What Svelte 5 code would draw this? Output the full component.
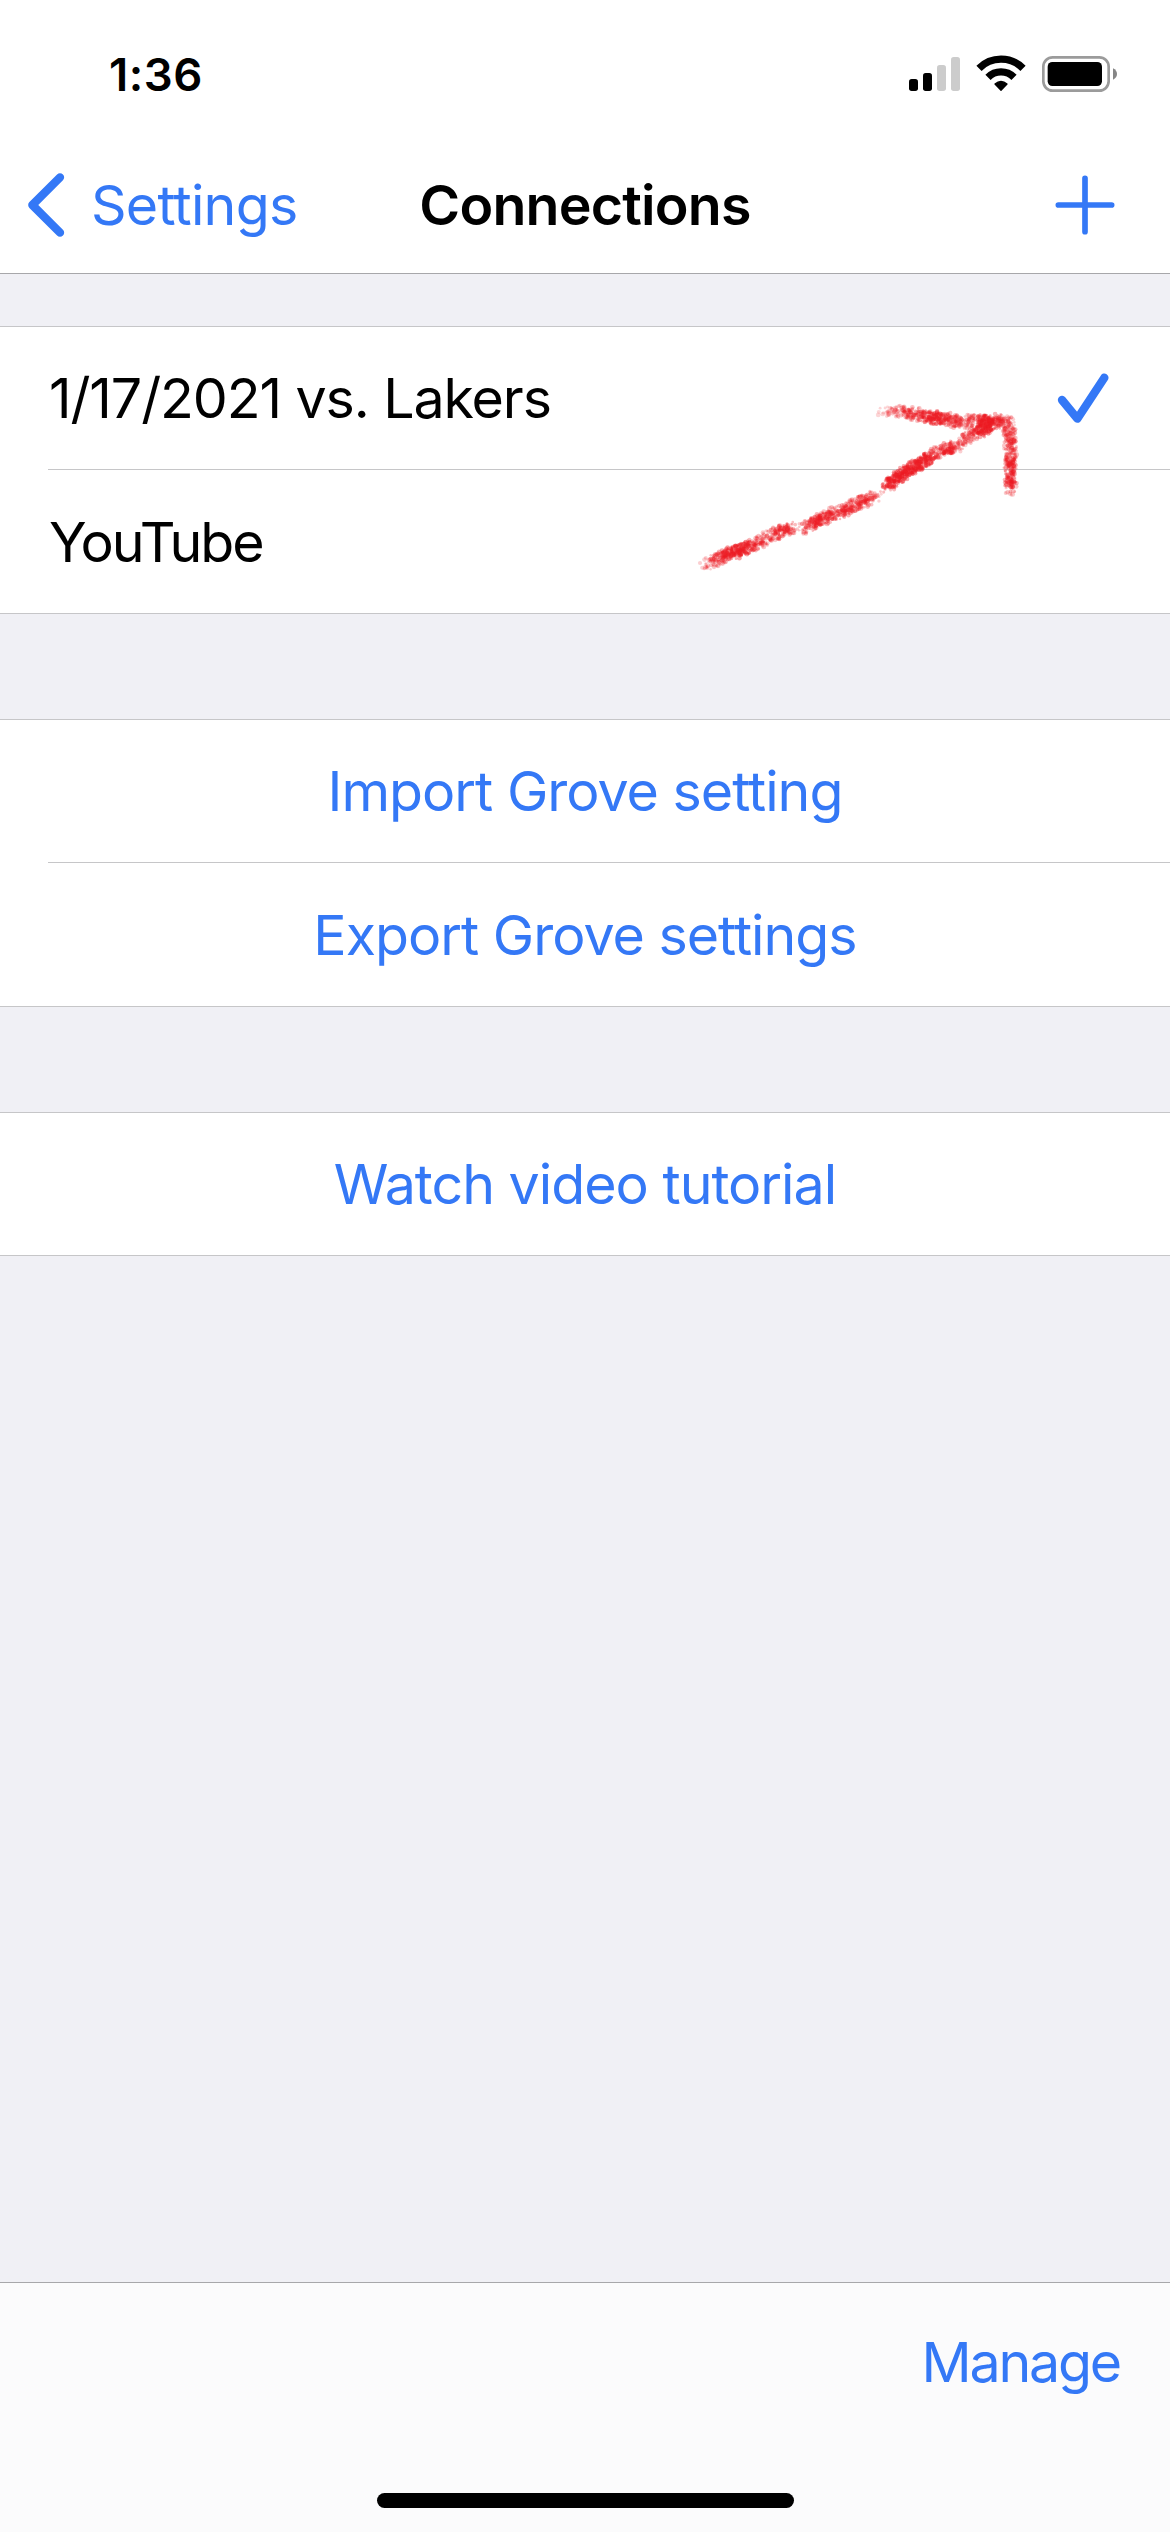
<script>
    let connections = [
        {name: "1/17/2021 vs. Lakers", cls: "lakers", selected: true},
        {name: "YouTube", cls: "youtube", selected: false}
    ]

    let settings = ["Import Grove setting", "Export Grove settings"]

    // points of the crayon strokes: x, y, density
    let strokes = [
        [[76,642,0.3],[105,632,0.5],[140,615,0.95],[175,604,1],[220,585,0.65],[265,562,0.35],[310,540,0.8],[336,532,0.5]],
        [[366,537,0.4],[415,513,0.85],[455,492,0.45],[490,485,0.75],[530,462,0.6],[575,442,0.6],[586,442,0.3]],
        [[618,415,0.55],[640,392,1],[690,356,0.85],[740,328,1],[772,306,0.4],[800,299,0.95],[832,287,0.3],[857,266,0.45],[885,248,0.6],[915,238,1],[945,222,0.7]],
        [[610,190,0.2],[640,187,0.25],[685,187,0.6],[725,197,0.55],[775,205,1],[802,207,0.6],[832,216,0.55],[870,212,0.4],[915,213,1],[960,211,0.6],[990,218,0.3]],
        [[988,222,0.3],[988,250,0.7],[993,290,0.45],[991,330,0.6],[993,360,0.7],[991,400,0.75],[990,426,0.25]]
    ]

    let seed = 7
    function random(){
        seed = (seed * 16807) % 2147483647
        return seed / 2147483647
    }

    // scatter small dots along each stroke
    function scatter(){
        let dots = []
        for(let points of strokes){
            for(let i = 0; i < points.length - 1; i++){
                let [x1, y1, d1] = points[i]
                let [x2, y2, d2] = points[i + 1]
                let length = Math.hypot(x2 - x1, y2 - y1)
                for(let s = 0; s < length; s += 0.42){
                    let t = s / length
                    let density = d1 + (d2 - d1) * t
                    if(random() > density + 0.1){
                        continue
                    }
                    let angle = random() * Math.PI * 2
                    let spread = Math.pow(random(), 0.6) * 21
                    dots.push({
                        x: (x1 + (x2 - x1) * t + Math.cos(angle) * spread).toFixed(1),
                        y: (y1 + (y2 - y1) * t + Math.sin(angle) * spread).toFixed(1),
                        r: (3.5 + random() * 4).toFixed(1),
                        o: (0.12 + density * 0.28).toFixed(2)
                    })
                }
            }
        }
        return dots
    }

    let dots = scatter()
</script>

<main>
    <header>
        <div class="status">
            <span class="time">1:36</span>
            <svg class="indicators" viewBox="0 0 630 120">
                <g transform="translate(-138 -72)">
                    <rect x="141" y="147" width="27" height="36" rx="8" />
                    <rect x="183" y="129" width="27" height="54" rx="8" />
                    <rect class="off" x="225" y="105" width="27" height="78" rx="8" />
                    <rect class="off" x="267" y="81" width="27" height="102" rx="8" />

                    <path class="wave" d="M351 115a93 93 0 0 1 132 0" />
                    <path class="wave" d="M378 142a55 55 0 0 1 78 0" />
                    <path class="wedge" d="M417 181l-18-19q18-15 36 0z" />

                    <rect class="shell" x="544" y="82" width="196" height="100" rx="28" />
                    <rect x="557" y="96" width="163" height="72" rx="14" />
                    <path class="nub" d="M753 115q12 6 12 17t-12 17z" />
                </g>
            </svg>
        </div>
        <nav>
            <button class="back">
                <svg class="chevron" viewBox="0 0 114 192"><path d="M99 13L16 96l83 83" /></svg>
                <span>Settings</span>
            </button>
            <h1>Connections</h1>
            <button class="add" aria-label="Add">
                <svg class="plus" viewBox="0 0 180 180"><path d="M90 10v160M10 90h160" /></svg>
            </button>
        </nav>
    </header>

    <section class="list">
        {#each connections as connection}
            <div class="row">
                <span class="label {connection.cls}">{connection.name}</span>
                {#if connection.selected}
                    <svg class="check" viewBox="0 0 156 150"><path d="M15 81l46 56L142 14" /></svg>
                {/if}
            </div>
        {/each}
        <svg class="arrow" viewBox="0 0 1470 810">
            {#each dots as dot}
                <circle cx={dot.x} cy={dot.y} r={dot.r} opacity={dot.o} />
            {/each}
        </svg>
    </section>

    <section class="list actions">
        {#each settings as setting}
            <div class="row"><span>{setting}</span></div>
        {/each}
    </section>

    <section class="list actions">
        <div class="row"><span>Watch video tutorial</span></div>
    </section>

    <footer>
        <button class="manage">Manage</button>
        <div class="home"></div>
    </footer>
</main>

<style>
    :global(body){
        margin: 0;
    }

    main{
        width: 1170px;
        height: 2532px;
        display: flex;
        flex-direction: column;
        overflow: hidden;
        background-color: #f0f0f5;
        color: #000;
        font-family: Inter, "Liberation Sans", sans-serif;
        font-size: 55.5px;
        line-height: 68px;
        white-space: nowrap;
    }

    header{
        height: 273px;
        background-color: #fff;
        border-bottom: 1px solid #a7a7aa;
        margin-bottom: 52px;
    }

    .status{
        height: 136px;
        box-sizing: border-box;
        padding: 54px 52px 0 109px;
        display: flex;
        justify-content: space-between;
        align-items: flex-start;
    }

    .time{
        font-size: 45.5px;
        font-weight: 600;
        line-height: 42px;
        letter-spacing: 0.5px;
    }

    .indicators{
        width: 210px;
        height: 40px;
    }
    .off{
        fill: #ccc;
    }
    .wave{
        fill: none;
        stroke: #000;
        stroke-width: 22;
    }
    .wedge{
        stroke: #000;
        stroke-width: 4;
        stroke-linejoin: round;
    }
    .shell{
        fill: none;
        stroke: #9b9b9b;
        stroke-width: 8;
    }
    .nub{
        fill: #868686;
    }

    nav{
        height: 137px;
        display: grid;
        grid-template-columns: 1fr auto 1fr;
        align-items: center;
    }

    button{
        border: none;
        padding: 0;
        background: none;
        color: #3478f6;
        font: inherit;
    }

    .back{
        display: flex;
        align-items: center;
        padding-left: 27px;
        letter-spacing: -0.75px;
    }
    .chevron{
        width: 38px;
        height: 64px;
        margin-right: 26px;
    }
    .chevron path, .plus path, .check path{
        fill: none;
        stroke: #3478f6;
        stroke-width: 25;
        stroke-linecap: round;
        stroke-linejoin: round;
    }

    h1{
        margin: 0;
        font-size: 55.5px;
        font-weight: 600;
        letter-spacing: -0.8px;
    }

    .add{
        justify-self: end;
        padding-right: 55px;
    }
    .plus{
        display: block;
        width: 60px;
        height: 60px;
    }
    .plus path{
        stroke-width: 17;
    }

    .list{
        position: relative;
        background-color: #fff;
        border-top: 1px solid #c6c6c8;
        border-bottom: 1px solid #c6c6c8;
        margin-bottom: 105px;
    }

    .row{
        height: 142px;
        margin-left: 48px;
        padding-right: 61px;
        display: flex;
        align-items: center;
        justify-content: space-between;
    }
    .row + .row{
        height: 143px;
        border-top: 1px solid #c6c6c8;
    }

    .label{
        padding-left: 1px;
    }
    .lakers{
        letter-spacing: -1.1px;
    }
    .youtube{
        letter-spacing: -2px;
    }

    .actions .row{
        justify-content: center;
        padding-right: 48px;
        color: #3478f6;
        letter-spacing: -1px;
    }

    .check{
        width: 52px;
        height: 50px;
    }

    /* hand drawn arrow pointing at the selected connection */
    .arrow{
        position: absolute;
        top: 23px;
        right: 0;
        width: 490px;
        height: 270px;
        fill: #ed1c24;
        pointer-events: none;
    }

    footer{
        margin-top: auto;
        height: 249px;
        border-top: 1px solid #a7a7aa;
        background-color: #fbfbfc;
        display: flex;
        flex-direction: column;
    }

    .manage{
        align-self: flex-end;
        margin: 45px 50px 0 0;
        letter-spacing: -2.2px;
    }

    .home{
        width: 417px;
        height: 15px;
        margin: auto auto 24px;
        border-radius: 8px;
        background-color: #000;
    }
</style>
